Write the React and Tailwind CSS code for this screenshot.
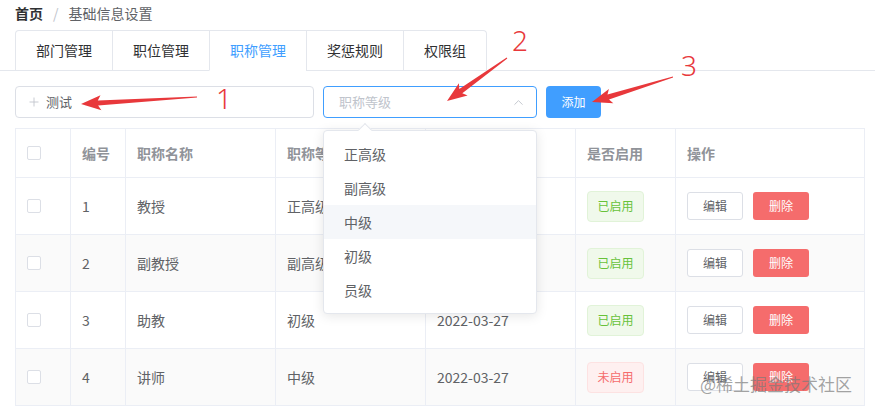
import { Plus, ChevronUp } from 'lucide-react'

const rows = [
  { id: 1, name: '教授', level: '正高级', date: '2022-03-27', on: true },
  { id: 2, name: '副教授', level: '副高级', date: '2022-03-27', on: true },
  { id: 3, name: '助教', level: '初级', date: '2022-03-27', on: true },
  { id: 4, name: '讲师', level: '中级', date: '2022-03-27', on: false },
]

const tabs = ['部门管理', '职位管理', '职称管理', '奖惩规则', '权限组']
const levels = ['正高级', '副高级', '中级', '初级', '员级']

// arrow polygon from tail (tx,ty) to tip (px,py)
const arrowPts = (tx, ty, px, py, headLen = 17, headW = 7.5, shaftW = 2.6) => {
  const dx = px - tx, dy = py - ty
  const L = Math.hypot(dx, dy)
  const ux = dx / L, uy = dy / L
  const nx = -uy, ny = ux
  const bx = px - ux * headLen, by = py - uy * headLen
  const wx = bx - ux * 3, wy = by - uy * 3
  const pts = [
    [tx + nx * 0.5, ty + ny * 0.5],
    [bx + nx * shaftW, by + ny * shaftW],
    [wx + nx * headW, wy + ny * headW],
    [px, py],
    [wx - nx * headW, wy - ny * headW],
    [bx - nx * shaftW, by - ny * shaftW],
    [tx - nx * 0.5, ty - ny * 0.5],
  ]
  return pts.map(p => p.map(v => v.toFixed(1)).join(',')).join(' ')
}

function Checkbox() {
  return <span className="block w-[14px] h-[14px] border border-[#dcdfe6] rounded-[2px] bg-white" />
}

export default function App() {
  return (
    <div className="relative w-[875px] h-[411px] overflow-hidden bg-white text-[14px] text-[#606266] font-['Noto_Sans_CJK_SC','Noto_Sans',sans-serif]">

      {/* Breadcrumb */}
      <div className="h-[30px] pt-[4px] px-[15px] flex items-start leading-[18px]">
        <span className="font-bold text-[#303133]">首页</span>
        <span className="mx-[10px] text-[#c0c4cc]">/</span>
        <span>基础信息设置</span>
      </div>

      {/* Tabs */}
      <div className="flex pl-[15px] border-b border-[#e4e7ed]">
        <div className="flex -mb-px border-t border-l border-r border-[#e4e7ed] rounded-t-[4px]">
          {tabs.map((t, i) => (
            <div
              key={t}
              className={`px-[20px] h-[40px] flex items-center justify-center border-b ${i > 0 ? 'border-l border-l-[#e4e7ed]' : ''} ${
                i === 2 ? 'text-[#409eff] border-b-white' : 'text-[#303133] border-b-[#e4e7ed]'
              }`}
            >
              {t}
            </div>
          ))}
        </div>
      </div>

      {/* Form row */}
      <div className="flex gap-[9px] px-[15px] mt-[15px] text-[13px]">
        <div className="w-[299px] h-[32px] border border-[#dcdfe6] rounded-[4px] flex items-center pl-[11px] gap-[5px]">
          <Plus size={14} strokeWidth={1.5} className="text-[#c0c4cc]" />
          <span className="text-[#606266]">测试</span>
        </div>
        <div className="w-[214px] h-[32px] border border-[#409eff] rounded-[4px] flex items-center justify-between pl-[15px] pr-[10px]">
          <span className="text-[#c0c4cc]">职称等级</span>
          <ChevronUp size={15} strokeWidth={1.5} className="text-[#c0c4cc]" />
        </div>
        <button className="w-[55px] h-[32px] rounded-[4px] bg-[#409eff] text-white text-[12px]">添加</button>
      </div>

      {/* Table */}
      <div className="mx-[15px] mt-[10px] w-[849px]">
        <table className="table-fixed w-[849px] border-collapse">
          <colgroup>
            <col className="w-[55px]" />
            <col className="w-[55px]" />
            <col className="w-[150px]" />
            <col className="w-[150px]" />
            <col className="w-[150px]" />
            <col className="w-[100px]" />
            <col className="w-[189px]" />
          </colgroup>
          <thead>
            <tr className="h-[49px] text-[#909399] font-bold text-left">
              <th className="border border-[#ebeef5] pl-[11px]"><Checkbox /></th>
              <th className="border border-[#ebeef5] px-[11px] font-bold">编号</th>
              <th className="border border-[#ebeef5] px-[11px] font-bold">职称名称</th>
              <th className="border border-[#ebeef5] px-[11px] font-bold">职称等级</th>
              <th className="border border-[#ebeef5] px-[11px] font-bold">创建时间</th>
              <th className="border border-[#ebeef5] px-[11px] font-bold">是否启用</th>
              <th className="border border-[#ebeef5] px-[11px] font-bold">操作</th>
            </tr>
          </thead>
          <tbody>
            {rows.map((r, i) => (
              <tr key={r.id} className={`h-[57px] ${i % 2 === 1 ? 'bg-[#fafafa]' : 'bg-white'}`}>
                <td className="border border-[#ebeef5] pl-[11px]"><Checkbox /></td>
                <td className="border border-[#ebeef5] px-[11px]">{r.id}</td>
                <td className="border border-[#ebeef5] px-[11px]">{r.name}</td>
                <td className="border border-[#ebeef5] px-[11px]">{r.level}</td>
                <td className="border border-[#ebeef5] px-[11px]">{r.date}</td>
                <td className="border border-[#ebeef5] px-[11px]">
                  {r.on ? (
                    <span className="inline-flex items-center justify-center w-[57px] h-[31px] rounded-[4px] border border-[#e1f3d8] bg-[#f0f9eb] text-[#67c23a] text-[12px]">已启用</span>
                  ) : (
                    <span className="inline-flex items-center justify-center w-[57px] h-[31px] rounded-[4px] border border-[#fde2e2] bg-[#fef0f0] text-[#f56c6c] text-[12px]">未启用</span>
                  )}
                </td>
                <td className="border border-[#ebeef5] px-[11px]">
                  <div className="flex gap-[10px]">
                    <button className="w-[56px] h-[28px] rounded-[3px] border border-[#dcdfe6] bg-white text-[#606266] text-[12px]">编辑</button>
                    <button className="w-[56px] h-[28px] rounded-[3px] bg-[#f56c6c] text-white text-[12px]">删除</button>
                  </div>
                </td>
              </tr>
            ))}
          </tbody>
        </table>
      </div>

      {/* Select dropdown */}
      <div className="absolute left-[323px] top-[130px] w-[214px] py-[6px] bg-white border border-[#e4e7ed] rounded-[4px] shadow-[0_2px_12px_0_rgba(0,0,0,0.1)]">
        <div className="absolute -top-[6px] left-[36px] w-[10px] h-[10px] bg-white border-t border-l border-[#e4e7ed] rotate-45" />
        {levels.map(l => (
          <div key={l} className={`h-[34px] flex items-center pl-[20px] text-[#606266] ${l === '中级' ? 'bg-[#f5f7fa]' : ''}`}>
            {l}
          </div>
        ))}
      </div>

      {/* Annotations */}
      <svg className="absolute inset-0 pointer-events-none" width="875" height="411">
        <polygon points={arrowPts(197, 97, 81, 104)} fill="#e8383b" />
        <polygon points={arrowPts(507, 58, 447, 101)} fill="#e8383b" />
        <polygon points={arrowPts(673, 77, 592, 102)} fill="#e8383b" />
      </svg>
      <span className="absolute left-[216px] top-[81px] text-[28px] leading-[34px] text-[#e8383b] font-['Noto_Sans',sans-serif] font-light">1</span>
      <span className="absolute left-[512px] top-[23px] text-[28px] leading-[34px] text-[#e8383b] font-['Noto_Sans',sans-serif] font-light">2</span>
      <span className="absolute left-[681px] top-[48px] text-[28px] leading-[34px] text-[#e8383b] font-['Noto_Sans',sans-serif] font-light">3</span>

      {/* Watermark */}
      <span className="absolute left-[700px] top-[372px] text-[17px] leading-[24px] text-[#7a7a7a]/70">@稀土掘金技术社区</span>
    </div>
  )
}
